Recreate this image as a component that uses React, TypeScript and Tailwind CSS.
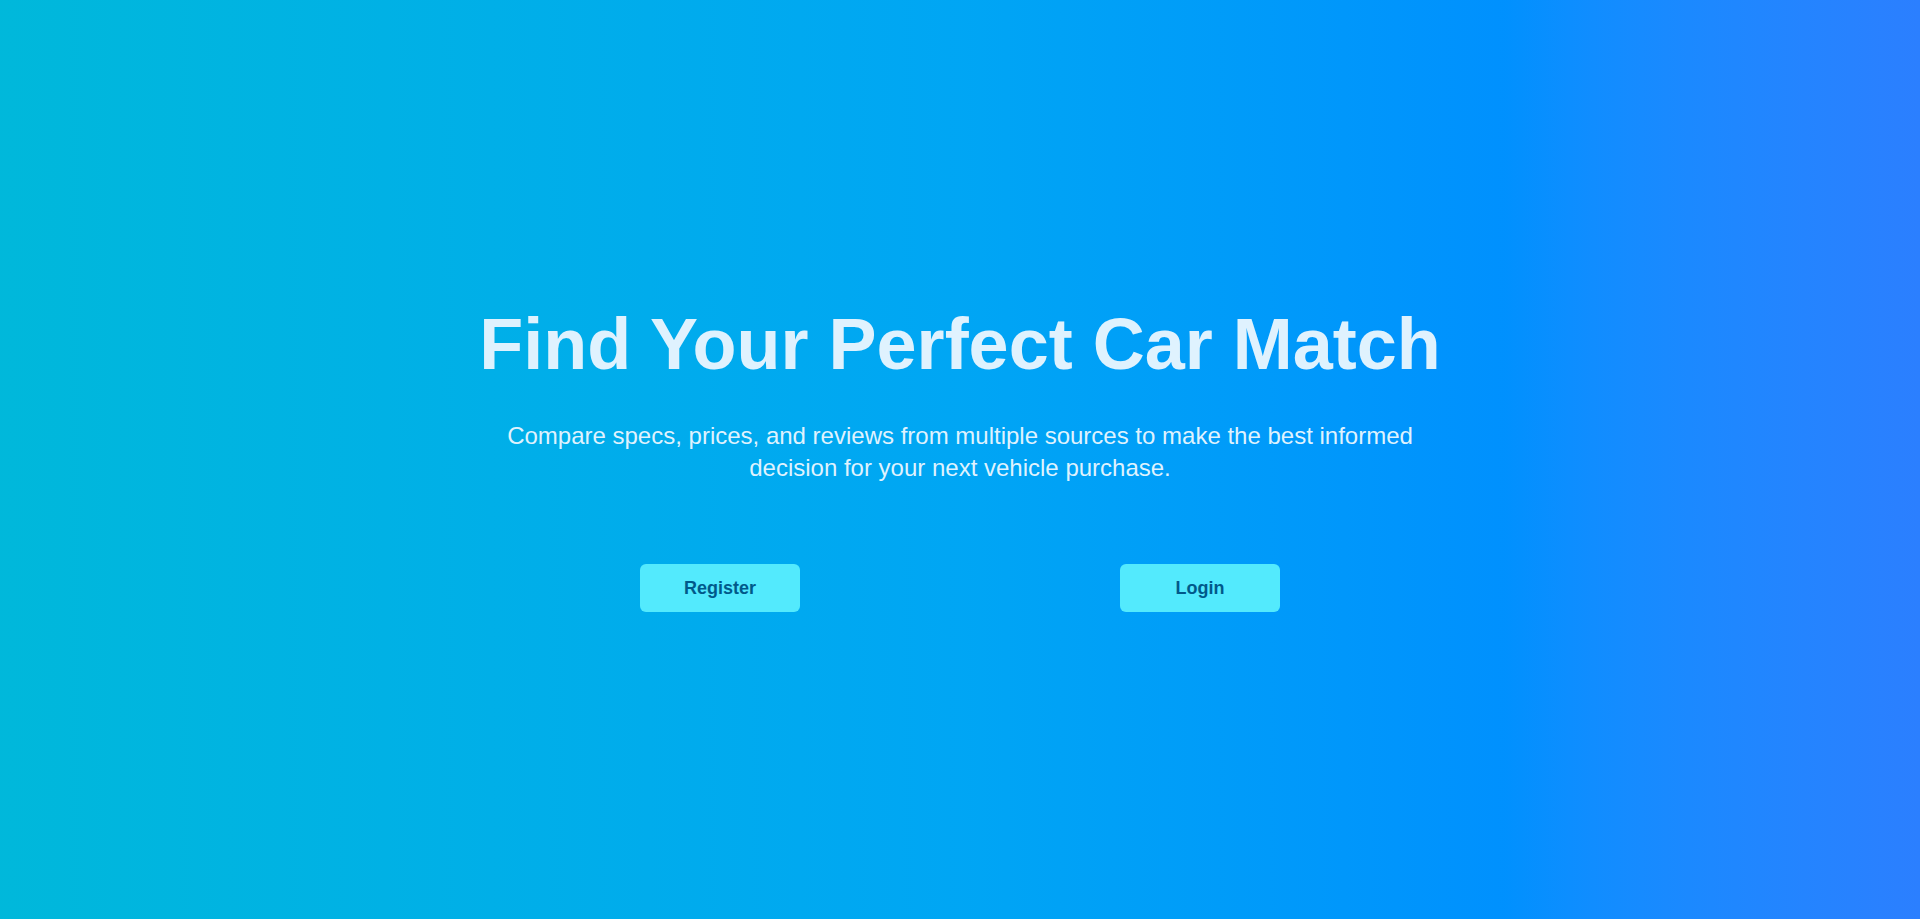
const App: React.FC = () => {
  return (
    <div className="min-h-screen w-full flex items-center justify-center bg-gradient-to-r from-cyan-500 via-sky-500 to-blue-500 font-['Liberation_Sans',Arial,sans-serif]">
      <div className="w-[960px] flex flex-col items-center text-center">
        <h1 className="text-7xl leading-none font-bold text-sky-100 mb-10 whitespace-nowrap">Find Your Perfect Car Match</h1>
        <p className="text-2xl leading-8 text-sky-100 mb-20">
          Compare specs, prices, and reviews from multiple sources to make the best informed decision for your next vehicle purchase.
        </p>
        <div className="grid grid-cols-2 w-full">
          <div className="flex justify-center">
            <button className="w-40 py-3 rounded-md bg-cyan-300 text-sky-800 font-bold text-lg leading-6">Register</button>
          </div>
          <div className="flex justify-center">
            <button className="w-40 py-3 rounded-md bg-cyan-300 text-sky-800 font-bold text-lg leading-6">Login</button>
          </div>
        </div>
      </div>
    </div>
  );
};

export default App;
